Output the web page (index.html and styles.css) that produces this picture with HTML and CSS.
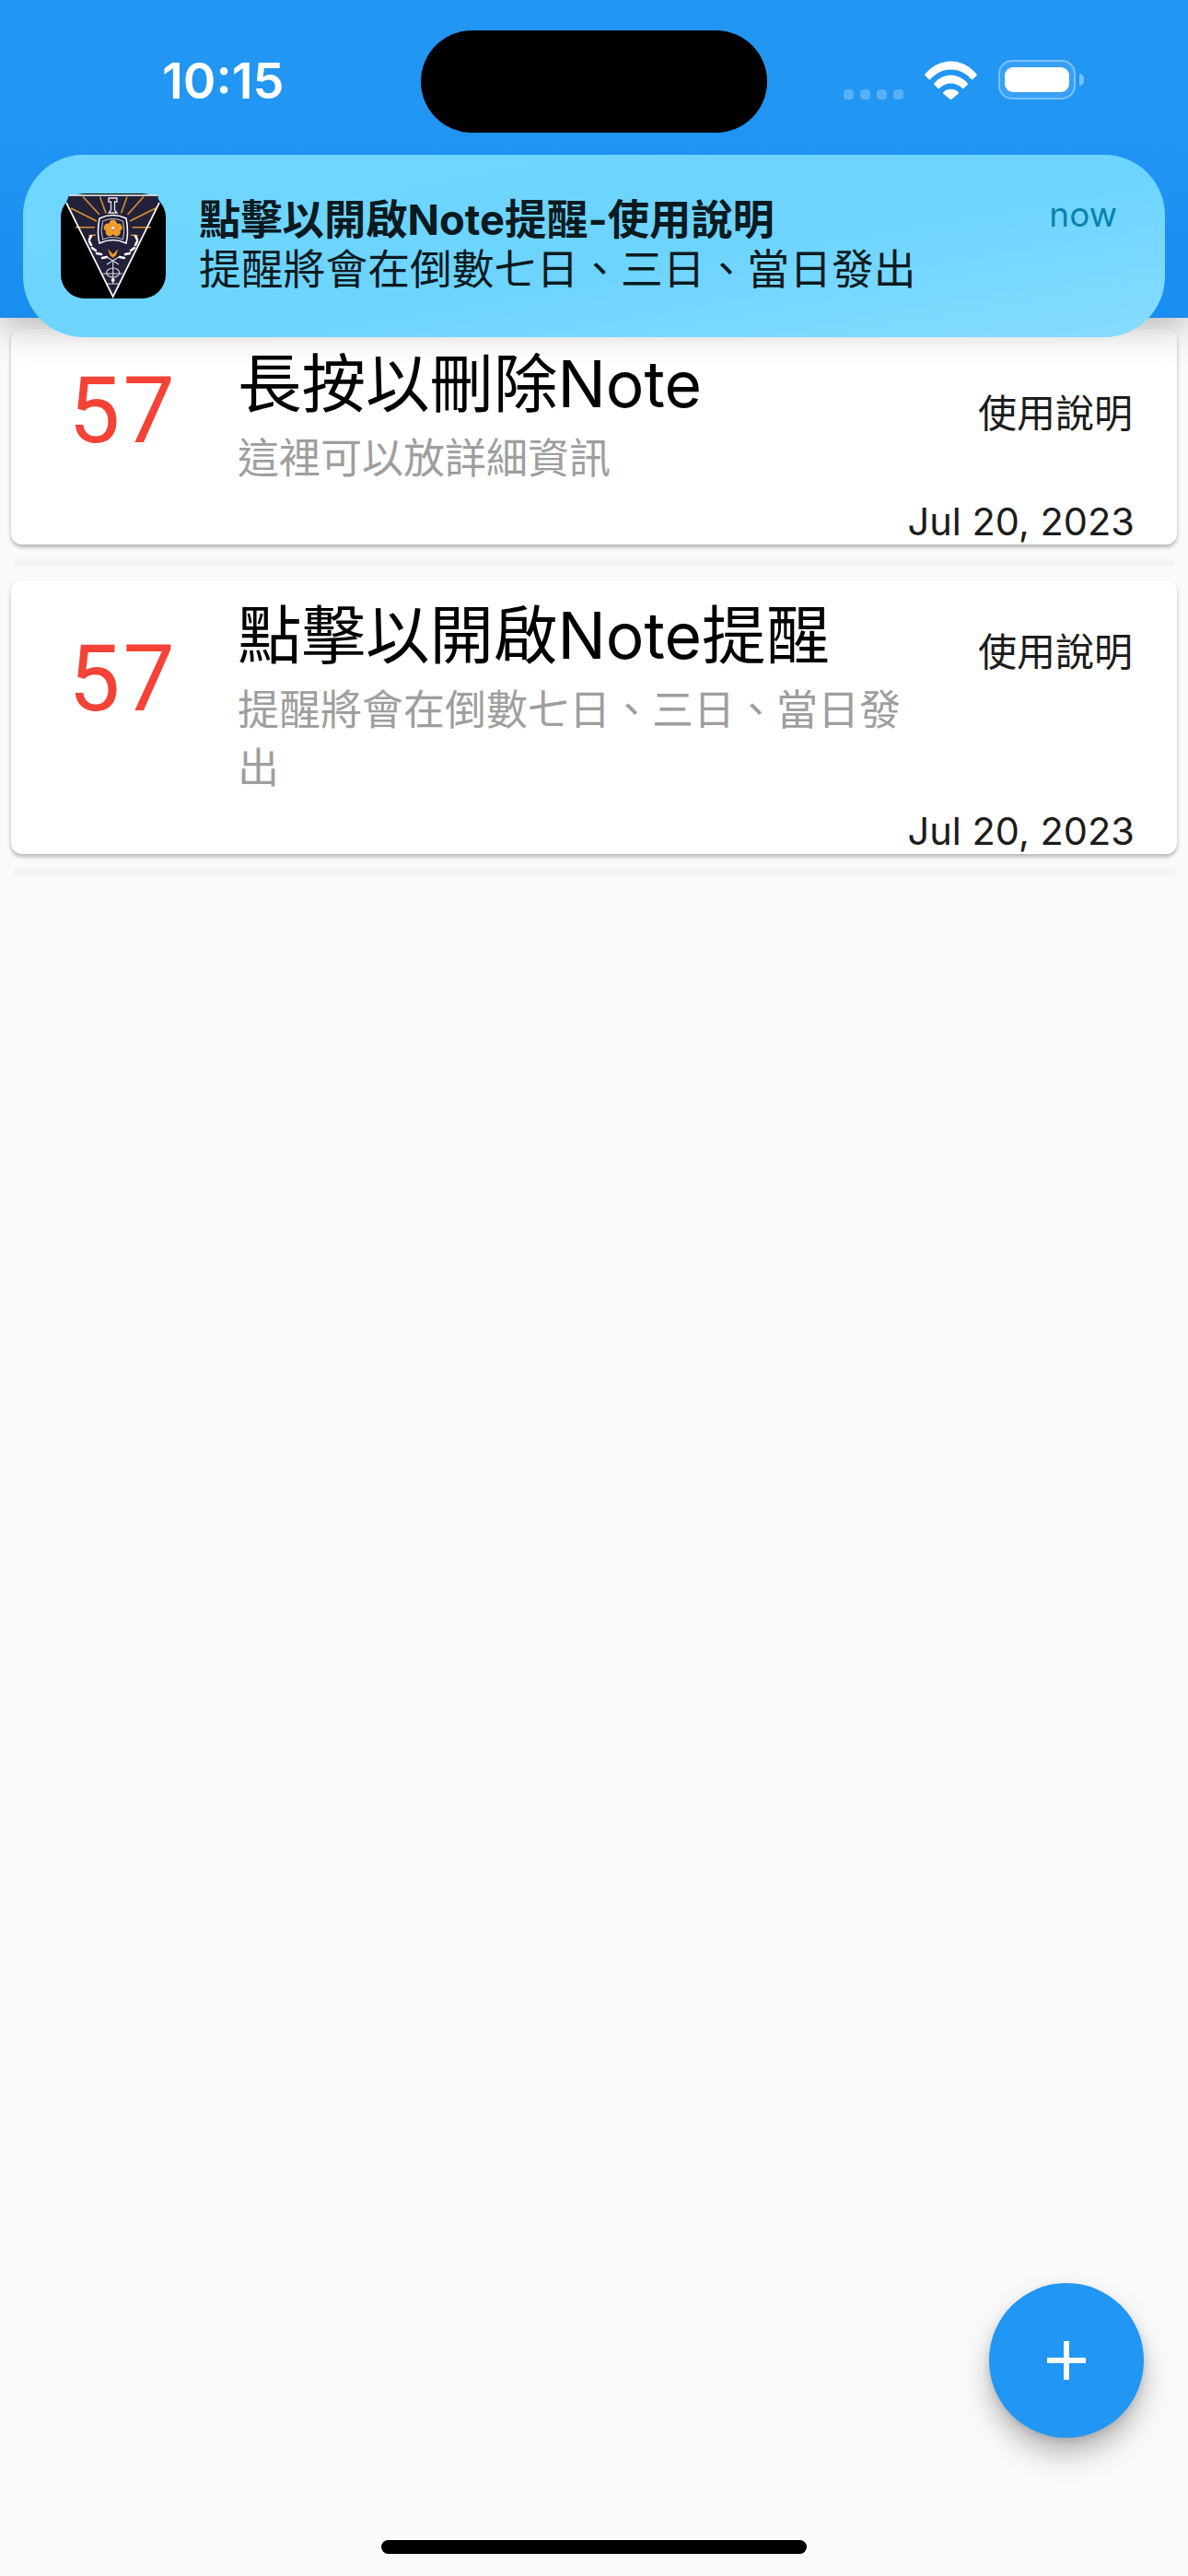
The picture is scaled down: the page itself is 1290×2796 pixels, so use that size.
FILE: index.html
```html
<!DOCTYPE html>
<html lang="en">
<head>
  <meta charset="UTF-8">
  <title>Note</title>
  <meta name="viewport" content="width=device-width, initial-scale=1.0" />
  <link rel="stylesheet" href="styles.css">
</head>
<body>

  <header class="app-bar">
    <div class="status-bar">
      <span class="clock">10:15</span>
      <div class="status-icons">
        <div class="signal"><i></i><i></i><i></i><i></i></div>
        <svg class="wifi" viewBox="0 0 57 42" aria-hidden="true">
          <path fill="#fff" d="M0.5 14.5 C7.5 6 17.5 0.5 28.5 0.5 C39.5 0.5 49.5 6 56.5 14.5 C57 15 57 15.6 56.5 16.1 L52.6 20 C52 20.6 51.3 20.6 50.8 20 C45 13.3 37.2 9.4 28.5 9.4 C19.8 9.4 12 13.3 6.2 20 C5.7 20.6 5 20.6 4.4 20 L0.5 16.1 C0 15.6 0 15 0.5 14.5 Z"/>
          <path fill="#fff" d="M10.5 24.2 C15 19.2 21.4 15.6 28.5 15.6 C35.6 15.6 42 19.2 46.5 24.2 C47 24.8 47 25.4 46.5 25.9 L42.6 29.8 C42 30.4 41.3 30.3 40.8 29.8 C37.6 26.4 33.3 24.4 28.5 24.4 C23.7 24.4 19.4 26.4 16.2 29.8 C15.7 30.3 15 30.4 14.4 29.8 L10.5 25.9 C10 25.4 10 24.8 10.5 24.2 Z"/>
          <path fill="#fff" d="M20.4 34 C22.6 32 25.4 30.8 28.5 30.8 C31.6 30.8 34.4 32 36.6 34 C37.2 34.6 37.2 35.2 36.6 35.8 L29.6 41.5 C29 42 28 42 27.4 41.5 L20.4 35.8 C19.8 35.2 19.8 34.6 20.4 34 Z"/>
        </svg>
        <div class="battery"><span class="battery-level"></span></div>
        <span class="battery-nub"></span>
      </div>
    </div>
  </header>

  <div class="island"></div>

  <div class="banner">
    <svg class="banner-icon" viewBox="0 0 114 114" aria-hidden="true">
      <rect width="114" height="114" rx="26" fill="#000"/>
      <path d="M9 1.5 H105 L107 10 L56.7 112 L6 10 Z" fill="#23203a"/>
      <g stroke="#d9912f" stroke-width="1.6" fill="none">
        <path d="M24 3.5 L42 23 M42.5 3.5 L49 21.5 M72 3.5 L65.5 21.5 M90 3.5 L72.5 23"/>
        <path d="M11 16 L39 30 M103 16 L75 30 M16 36.7 L37 36.7 M77.5 36.7 L98 36.7 M30 46 L38 45 M76 45 L84 46"/>
      </g>
      <path d="M6 10 L56.7 112 L107 10 M9 2 H105" fill="none" stroke="#fff" stroke-width="1.7"/>
      <path d="M52 5 H61 V9 H58.5 V18 L61 21 H52 L54.5 18 V9 H52 Z" fill="none" stroke="#e8e8ee" stroke-width="1.3"/>
      <path d="M42 27 Q56.7 20 71 27 Q74 42 71 54 Q56.7 47 42 54 Q39 42 42 27 Z" fill="#23203a" stroke="#fff" stroke-width="1.5"/>
      <path d="M45.5 30 Q56.7 25 67.5 30 Q70 41 67.5 50 Q56.7 45 45.5 50 Q43 41 45.5 30 Z" fill="none" stroke="#c9c9d2" stroke-width="1"/>
      <circle cx="56.7" cy="33" r="4.4" fill="#ee9a2e"/>
      <circle cx="51" cy="37" r="4.4" fill="#ee9a2e"/>
      <circle cx="62.4" cy="37" r="4.4" fill="#ee9a2e"/>
      <circle cx="53" cy="42" r="4.4" fill="#ee9a2e"/>
      <circle cx="60.4" cy="42" r="4.4" fill="#ee9a2e"/>
      <circle cx="56.7" cy="37.5" r="1.6" fill="#fff"/>
      <g stroke="#fff" stroke-width="2.6" stroke-linecap="round" fill="none">
        <path d="M33 46 L31 50 M31 52 L33 56 M34 59 L38 62 M39 65 L44 66 M45 70 L50 69"/>
        <path d="M81 46 L83 50 M83 52 L81 56 M80 59 L76 62 M75 65 L70 66 M69 70 L64 69"/>
      </g>
      <path d="M51 60 L56.7 66 L62.4 60 L60 67 L56.7 70 L53.4 67 Z" fill="#ee9a2e"/>
      <g stroke="#dcdce6" stroke-width="1.1" fill="none">
        <path d="M50 69 L63 77 M63 69 L50 77 M56.7 74 V98"/>
        <ellipse cx="56.7" cy="86" rx="7" ry="5"/>
        <path d="M46 87 H67 M50 98 L63 98"/>
      </g>
      <circle cx="56.7" cy="94" r="2" fill="#fff"/>
    </svg>
    <div class="banner-text">
      <div class="banner-title">點擊以開啟Note提醒-使用說明</div>
      <div class="banner-body">提醒將會在倒數七日、三日、當日發出</div>
    </div>
    <span class="banner-time">now</span>
  </div>

  <main class="note-list">
    <article class="note-card">
      <div class="note-row">
        <div class="note-days">57</div>
        <div class="note-body">
          <h2 class="note-title">長按以刪除Note</h2>
          <p class="note-desc">這裡可以放詳細資訊</p>
        </div>
        <div class="note-tag">使用說明</div>
      </div>
      <div class="note-date">Jul 20, 2023</div>
    </article>
    <hr class="note-divider">

    <article class="note-card note-card-tall">
      <div class="note-row">
        <div class="note-days">57</div>
        <div class="note-body">
          <h2 class="note-title">點擊以開啟Note提醒</h2>
          <p class="note-desc">提醒將會在倒數七日、三日、當日發出</p>
        </div>
        <div class="note-tag">使用說明</div>
      </div>
      <div class="note-date">Jul 20, 2023</div>
    </article>
    <hr class="note-divider">
  </main>

  <button class="fab" type="button" aria-label="Add note">
    <svg viewBox="0 0 42 42" aria-hidden="true"><path fill="#fff" d="M18 0 H24 V18 H42 V24 H24 V42 H18 V24 H0 V18 H18 Z"/></svg>
  </button>

  <div class="home-bar"></div>

</body>
</html>
```

FILE: styles.css
```css
* {
  box-sizing: border-box;
}

body {
  position: relative;
  width: 1290px;
  height: 2796px;
  margin: 0;
  overflow: hidden;
  background: #fafafa;
  font-family: Inter, "Noto Sans CJK TC", sans-serif;
}

.app-bar {
  position: relative;
  z-index: 2;
  height: 345px;
  background: linear-gradient(#2196f3 0, #2196f3 110px, #198df0 100%);
  box-shadow: 0 8px 40px rgba(0, 0, 0, 0.3);
}

.status-bar {
  display: flex;
  justify-content: space-between;
  align-items: flex-start;
  padding: 58px 113px 0 176px;
}

.clock {
  color: #fff;
  font-size: 54px;
  font-weight: 600;
  line-height: 60px;
}

.status-icons {
  display: flex;
  align-items: flex-end;
  margin-top: 7px;
  height: 43px;
}

.signal {
  display: flex;
  gap: 7px;
  margin-right: 23px;
}

.signal i {
  width: 11px;
  height: 11px;
  border-radius: 4px;
  background: rgba(255, 255, 255, 0.25);
}

.wifi {
  width: 57px;
  height: 42px;
  margin-right: 23px;
}

.battery {
  width: 84px;
  height: 43px;
  padding: 6px 5px;
  border: 2px solid rgba(255, 255, 255, 0.35);
  border-radius: 15px;
  background: rgba(255, 255, 255, 0.1);
}

.battery-level {
  display: block;
  height: 100%;
  border-radius: 9px;
  background: #fff;
}

.battery-nub {
  width: 5px;
  height: 13px;
  margin: 0 0 15px 4px;
  border-radius: 0 6px 6px 0;
  background: rgba(255, 255, 255, 0.4);
}

.island {
  position: absolute;
  z-index: 4;
  top: 33px;
  left: 457px;
  width: 376px;
  height: 111px;
  border-radius: 56px;
  background: #000;
}

.banner {
  position: absolute;
  z-index: 3;
  top: 168px;
  left: 25px;
  width: 1240px;
  height: 198px;
  display: flex;
  align-items: flex-start;
  padding: 42px 52px 0 41px;
  border-radius: 66px;
  background: linear-gradient(170deg, #6fd6ff 0, #6cd4ff 55%, #86dcff 100%);
  color: #0c1a20;
}

.banner-icon {
  flex: none;
  width: 114px;
  height: 114px;
}

.banner-text {
  margin-left: 36px;
  margin-top: 2px;
}

.banner-title {
  font-size: 45.3px;
  font-weight: 700;
  line-height: 54px;
}

.banner-body {
  font-size: 45.8px;
  line-height: 54px;
}

.banner-time {
  margin-left: auto;
  margin-top: -4px;
  color: #0a82ad;
  font-size: 37px;
  line-height: 54px;
}

.note-list {
  padding: 12px 12px 0;
}

.note-card {
  background: #fff;
  border-radius: 12px;
  box-shadow: 0 3px 4px rgba(0, 0, 0, 0.28);
}

.note-row {
  display: flex;
  align-items: flex-start;
  padding-right: 48px;
}

.note-days {
  flex: none;
  width: 243px;
  margin: 29px 3px 0 0;
  color: #f44336;
  font-family: Roboto, sans-serif;
  font-size: 100px;
  line-height: 120px;
  letter-spacing: 3px;
  text-align: center;
}

.note-card-tall .note-days {
  margin-top: 47px;
}

.note-body {
  flex: none;
  width: 745px;
  padding: 15px 0 12px;
}

.note-title {
  margin: 0;
  color: #000;
  font-size: 69.5px;
  font-weight: 400;
  line-height: 90px;
}

.note-desc {
  margin: 4px 0 0;
  color: #9e9e9e;
  font-size: 45px;
  line-height: 63px;
}

.note-tag {
  margin-left: auto;
  margin-top: 62px;
  color: #1c1c1c;
  font-size: 42px;
  line-height: 60px;
}

.note-card-tall .note-tag {
  margin-top: 48px;
}

.note-date {
  padding-right: 46px;
  color: #1c1c1c;
  font-size: 41.5px;
  line-height: 50px;
  text-align: right;
}

.note-divider {
  height: 7px;
  margin: 16px 3px;
  border: 0;
  background: #f3f3f3;
}

.fab {
  position: absolute;
  top: 2478px;
  left: 1074px;
  width: 168px;
  height: 168px;
  display: flex;
  align-items: center;
  justify-content: center;
  padding: 0;
  border: 0;
  border-radius: 50%;
  background: #2196f3;
  box-shadow: 0 18px 30px rgba(0, 0, 0, 0.25), 0 4px 10px rgba(0, 0, 0, 0.12);
}

.fab svg {
  width: 42px;
  height: 42px;
}

.home-bar {
  position: absolute;
  top: 2757px;
  left: 414px;
  width: 462px;
  height: 15px;
  border-radius: 8px;
  background: #000;
}
```
